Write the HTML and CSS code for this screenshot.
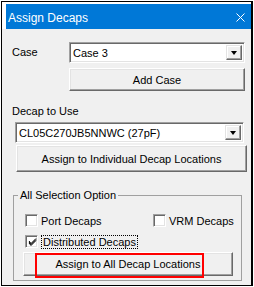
FILE: index.html
```html
<!DOCTYPE html>
<html lang="en">
<head>
  <meta charset="UTF-8">
  <title>Assign Decaps</title>
  <link rel="stylesheet" href="styles.css">
</head>
<body>
  <div class="window">
    <div class="caption-wrap">
      <div class="caption">
        <span class="caption-title">Assign Decaps</span>
        <svg class="close" width="9" height="9" viewBox="0 0 9 9">
          <path d="M0.5 0.5 L8.5 8.5 M8.5 0.5 L0.5 8.5" stroke="#fff" stroke-width="1" fill="none"/>
        </svg>
      </div>
    </div>

    <div class="content">
      <div class="case-row">
        <div class="case-lbl">Case</div>
        <div class="case-col">
          <div class="combo">
            <span class="combo-text">Case 3</span>
            <span class="drop"><span class="arrow"></span></span>
          </div>
          <button class="btn add-btn">Add Case</button>
        </div>
      </div>

      <div class="section-lbl">Decap to Use</div>
      <div class="combo decap-combo">
        <span class="combo-text">CL05C270JB5NNWC (27pF)</span>
        <span class="drop"><span class="arrow"></span></span>
      </div>
      <button class="btn indiv-btn">Assign to Individual Decap Locations</button>

      <fieldset class="group">
        <legend>All Selection Option</legend>
        <div class="check-row">
          <label class="check port"><span class="box"></span>Port Decaps</label>
          <label class="check"><span class="box"></span>VRM Decaps</label>
        </div>
        <div class="check-row">
          <label class="check"><span class="box"><svg width="9" height="9" viewBox="0 0 9 9"><path d="M1 4 L3 6.5 L8 1.5 M1 5 L3 7.5 L8 2.5 M1 3 L3 5.5 L8 0.5" stroke="#000" stroke-width="1" fill="none"/></svg></span><span class="focus">Distributed Decaps</span></label>
        </div>
        <div class="all-wrap">
          <button class="btn all-btn">Assign to All Decap Locations</button>
          <span class="highlight"></span>
        </div>
      </fieldset>
    </div>
  </div>
</body>
</html>
```

FILE: styles.css
```css
body {
  margin: 0;
  background: #fff;
  font-family: "Liberation Sans", Arial, sans-serif;
  font-size: 11px;
  color: #000;
}

.window {
  box-sizing: border-box;
  margin: 1px 0 0 1px;
  width: 252px;
  height: 285px;
  border: 1px solid #000;
  border-right-width: 2px;
  background: #f0f0f0;
}

.caption-wrap {
  background: #fff;
  padding: 2px 0 0 4px;
}

.caption {
  height: 25px;
  background: #0078d7;
  display: flex;
  align-items: center;
  justify-content: space-between;
  padding: 0 6px 0 2px;
  color: #fff;
}

.caption-title {
  font-size: 12px;
  padding-top: 2px;
}

.close {
  display: block;
  margin-top: 1px;
}

.content {
  padding: 13px 0 0 0;
}

/* combo boxes */
.combo {
  box-sizing: border-box;
  height: 21px;
  background: #fff;
  border: 1px solid;
  border-color: #a0a0a0 #fff #fff #a0a0a0;
  box-shadow: inset 1px 1px 0 #696969, inset -1px -1px 0 #e3e3e3;
  display: flex;
  align-items: center;
  justify-content: space-between;
  padding: 0 2px 0 3px;
}

.drop {
  box-sizing: border-box;
  width: 16px;
  height: 15px;
  background: #f0f0f0;
  border: 1px solid;
  border-color: #e3e3e3 #696969 #696969 #e3e3e3;
  box-shadow: inset -1px -1px 0 #a0a0a0, inset 1px 1px 0 #fff;
  display: flex;
  align-items: center;
  justify-content: center;
}

.arrow {
  width: 0;
  height: 0;
  border-left: 3.5px solid transparent;
  border-right: 3.5px solid transparent;
  border-top: 4px solid #000;
}

/* buttons */
.btn {
  display: block;
  box-sizing: border-box;
  font-family: inherit;
  font-size: 11px;
  color: #000;
  background: #f0f0f0;
  border: 1px solid;
  border-color: #fff #696969 #696969 #fff;
  box-shadow: inset -1px -1px 0 #a0a0a0, inset 1px 1px 0 #e3e3e3;
  padding: 0;
}

.case-row {
  display: flex;
  padding-left: 10px;
}

.case-lbl {
  width: 57px;
  padding-top: 4px;
}

.case-col {
  width: 176px;
}

.add-btn {
  width: 176px;
  height: 23px;
  margin-top: 5px;
}

.section-lbl {
  margin: 14px 0 0 10px;
  line-height: 13px;
}

.decap-combo {
  width: 229px;
  margin: 4px 0 0 13px;
}

.indiv-btn {
  width: 231px;
  height: 27px;
  margin: 2px 0 0 14px;
}

/* group box */
.group {
  width: 229px;
  box-sizing: border-box;
  margin: 17px 0 0 11px;
  padding: 8px 0 0 0;
  height: 92px;
  border: 1px solid #a0a0a0;
}

.group legend {
  padding: 0 2px;
  margin-left: 4px;
  line-height: 13px;
}

.check-row {
  display: flex;
  padding-left: 11px;
  height: 21px;
  align-items: center;
}

.check {
  display: flex;
  align-items: center;
}

.port {
  width: 128px;
}

.box {
  box-sizing: border-box;
  width: 13px;
  height: 13px;
  margin-right: 3px;
  background: #fff;
  border: 1px solid;
  border-color: #a0a0a0 #fff #fff #a0a0a0;
  box-shadow: inset 1px 1px 0 #696969, inset -1px -1px 0 #e3e3e3;
  display: flex;
  align-items: center;
  justify-content: center;
}

.box svg {
  display: block;
  margin: 1px 0 0 1px;
}

.focus {
  border: 1px dotted #000;
  padding: 0 1px;
  line-height: 12px;
}

.all-wrap {
  position: relative;
  margin: 0 0 0 9px;
}

.all-btn {
  width: 210px;
  height: 24px;
}

.highlight {
  position: absolute;
  left: 12px;
  top: 1px;
  width: 165px;
  height: 21px;
  border: 2px solid #ff0000;
}
```
